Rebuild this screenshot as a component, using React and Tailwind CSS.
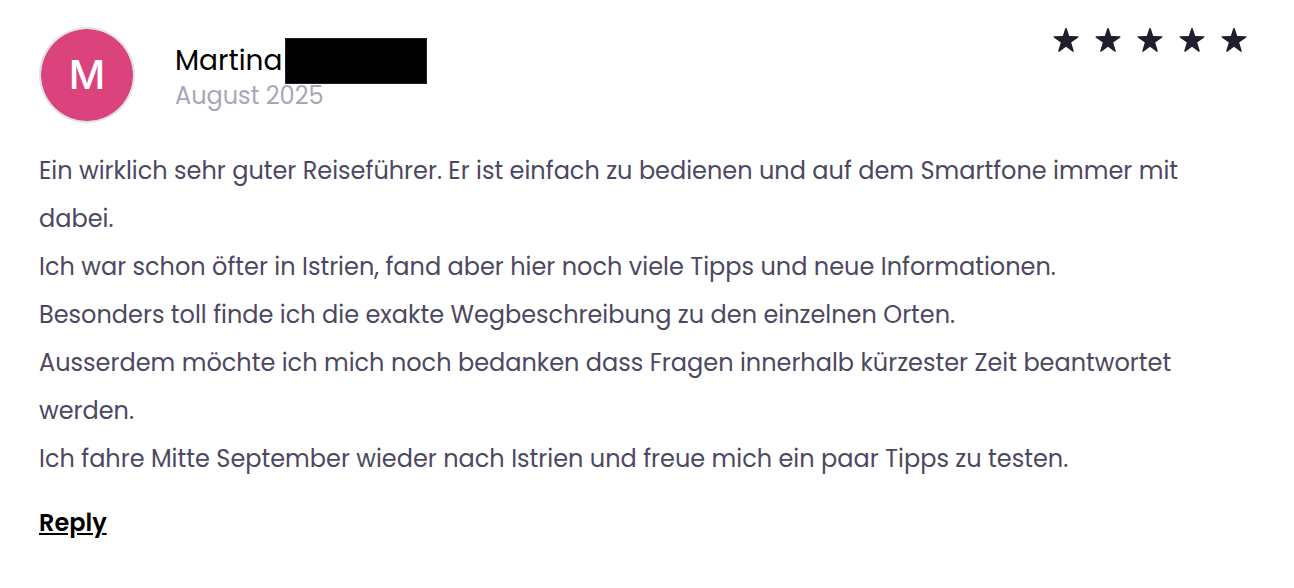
import React from 'react';

const review = {
    name: 'Martina',
    initial: 'M',
    date: 'August 2025',
    rating: 5,
    lines: [
        'Ein wirklich sehr guter Reiseführer. Er ist einfach zu bedienen und auf dem Smartfone immer mit dabei.',
        'Ich war schon öfter in Istrien, fand aber hier noch viele Tipps und neue Informationen.',
        'Besonders toll finde ich die exakte Wegbeschreibung zu den einzelnen Orten.',
        'Ausserdem möchte ich mich noch bedanken dass Fragen innerhalb kürzester Zeit beantwortet werden.',
        'Ich fahre Mitte September wieder nach Istrien und freue mich ein paar Tipps zu testen.',
    ],
};

function Star() {
    return (
        <svg viewBox="0 0 26 26" className="size-[26px]" fill="#1e1e2d" aria-hidden="true">
            <path d="M12.2 1.6 Q13 0.2 13.8 1.6 L16.2 9 L25 9.2 Q26 9.7 25.2 10.4 L18.2 15.6 L20.8 24 Q20.7 25.2 19.7 24.7 L13 19.8 L6.3 24.7 Q5.3 25.2 5.2 24 L7.8 15.6 L0.8 10.4 Q0 9.7 1 9.2 L9.8 9 Z" />
        </svg>
    );
}

function ReviewCard() {
    return (
        <article className="px-[39px] pt-[27px] pb-12">
            <header className="flex items-start justify-between">
                <div className="flex gap-10">
                    <div className="flex size-24 items-center justify-center rounded-full border-2 border-gray-300/70 bg-[#db437d] bg-clip-padding font-[Inter,sans-serif] text-[40px] font-medium text-white">
                        {review.initial}
                    </div>
                    <div className="pt-[11px]">
                        <div className="flex items-center gap-[3px]">
                            <h3 className="text-[28px] leading-[46px] text-black">{review.name}</h3>
                            <span className="h-[46px] w-[142px] border border-[#1e1e2d] bg-black" />
                        </div>
                        <p className="text-2xl leading-6 text-[#a9a7b5]">{review.date}</p>
                    </div>
                </div>
                <div className="flex gap-4 pr-2" role="img" aria-label={`${review.rating} stars`}>
                    {Array.from({ length: review.rating }, (_, i) => (
                        <Star key={i} />
                    ))}
                </div>
            </header>
            <div className="mt-6 text-2xl leading-[48px] text-[#4d4861]">
                {review.lines.map((line) => (
                    <p key={line}>{line}</p>
                ))}
            </div>
            <button type="button" className="mt-6 text-2xl font-semibold text-black underline">
                Reply
            </button>
        </article>
    );
}

function App() {
    return (
        <main className="min-h-screen bg-white font-[Poppins,Inter,sans-serif]">
            <ReviewCard />
        </main>
    );
}

export default App;
